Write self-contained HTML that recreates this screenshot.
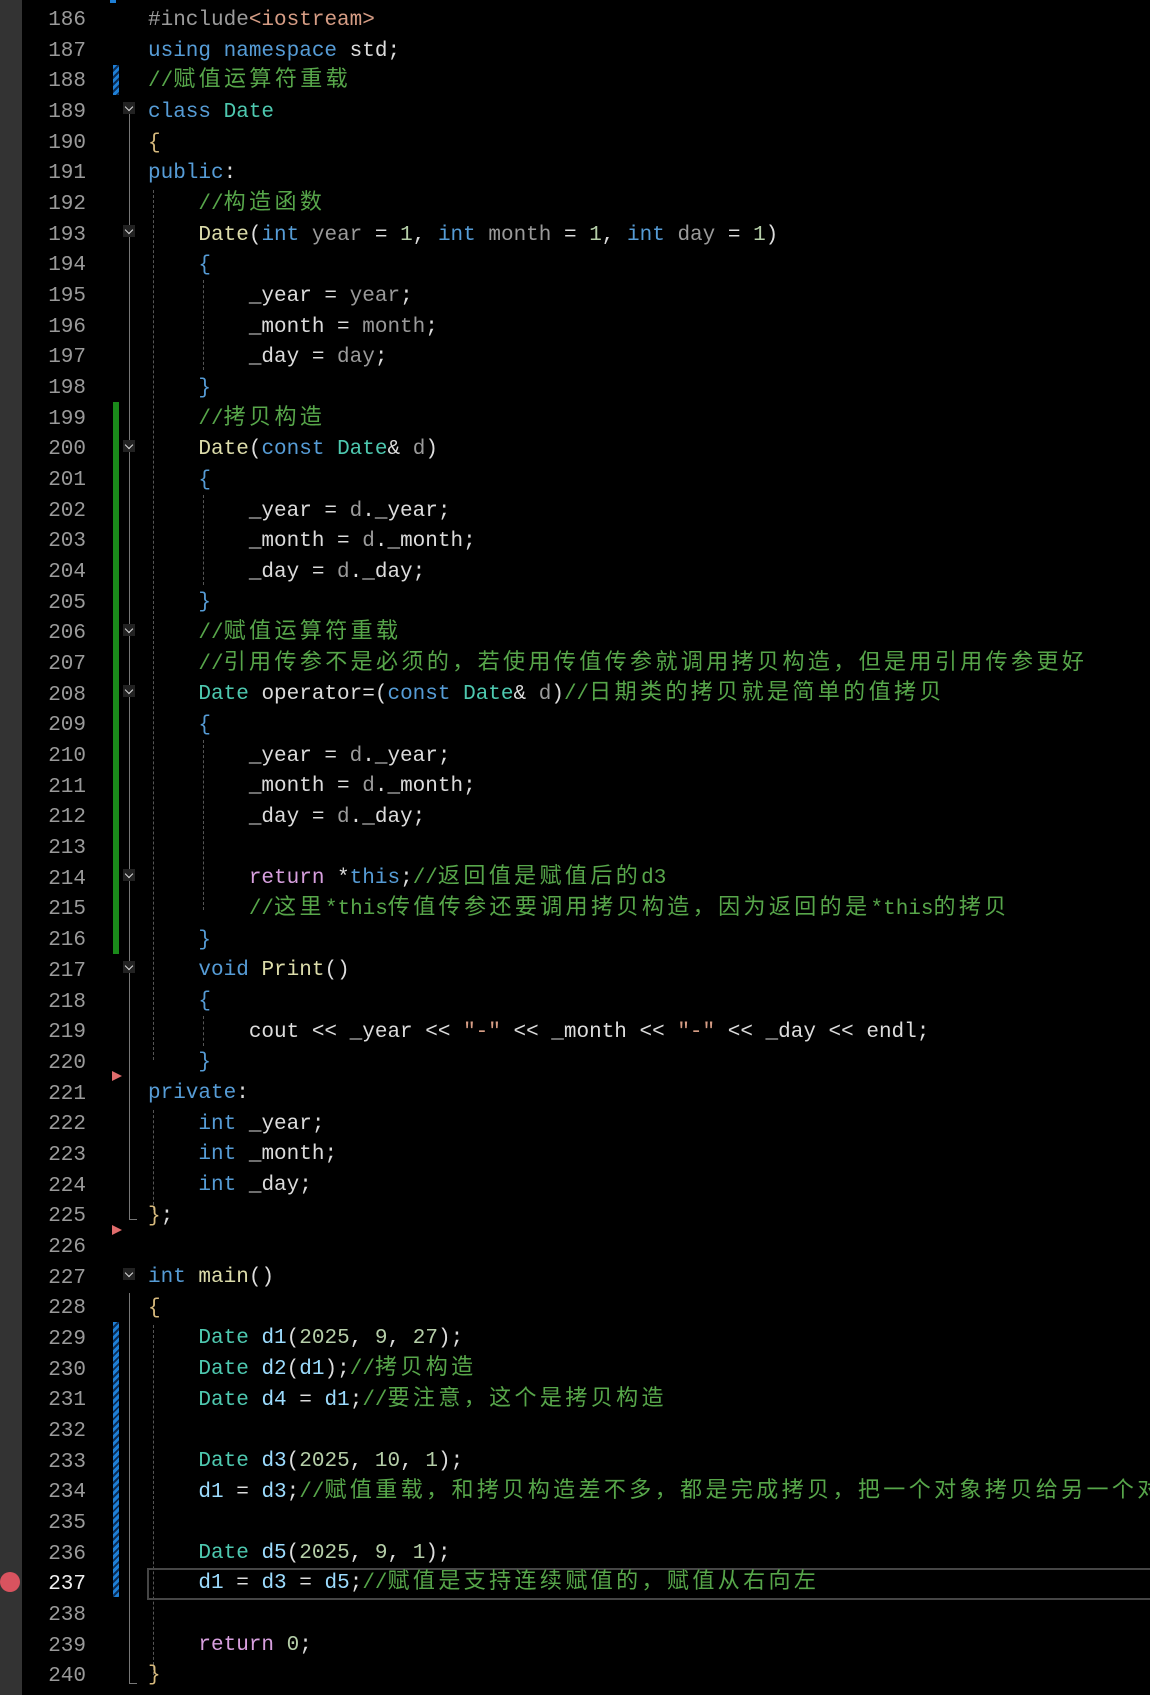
<!DOCTYPE html>
<html><head><meta charset="utf-8"><style>
html,body{margin:0;padding:0;background:#000;width:1150px;height:1695px;overflow:hidden;position:relative}
.g{position:absolute;left:0;top:0;width:22px;height:1695px;background:#333}
.ln{position:absolute;left:30px;width:56px;text-align:right;font:21px/30.67px "Liberation Mono",monospace;color:#9a9a9a}
.cd{position:absolute;left:148px;font:21px "Liberation Mono",monospace;color:#dcdcdc}
.cd div{height:30.67px;line-height:30.67px;white-space:pre;overflow:visible}
i{font-style:normal;font-family:"Noto Sans CJK SC",sans-serif;font-size:22px;letter-spacing:3.4px;line-height:1px}
.k{color:#569cd6}.t{color:#4ec9b0}.c{color:#57a64a}.f{color:#dcdcaa}.p{color:#9a9a9a}.s{color:#d69d85}.n{color:#b5cea8}.r{color:#d8a0df}.v{color:#9cdcfe}.b1{color:#d7ba7d}.b2{color:#569cd6}.pp{color:#9b9b9b}
.fold{position:absolute;left:123px;width:12px;height:12px;background:#222}
.fold:after{content:"";position:absolute;left:3px;top:2px;width:5px;height:5px;border-right:1.5px solid #ddd;border-bottom:1.5px solid #ddd;transform:rotate(45deg)}
.vl{position:absolute;width:1px;background:#777}
.dash{position:absolute;width:0;border-left:1px dashed #555}
.tri{position:absolute;left:112px;width:0;height:0;border-top:5px solid transparent;border-bottom:5px solid transparent;border-left:10px solid #e06c6c}
.hatch{position:absolute;left:113px;width:6px;background:repeating-linear-gradient(135deg,#1e7fd6 0 3px,#0a2c55 3px 5px)}
</style></head><body>
<div class="g"></div>
<div style="position:absolute;left:110px;top:0;width:6px;height:3px;background:#1e7fd6"></div>
<div class="hatch" style="top:65px;height:30px"></div>
<div style="position:absolute;left:113px;top:402px;width:6px;height:552px;background:#1a8a1a"></div>
<div class="hatch" style="top:1322px;height:275px"></div>
<div class="vl" style="left:129px;top:110px;height:1109px"></div>
<div class="vl" style="left:129px;top:1219px;width:8px;height:1px"></div>
<div class="vl" style="left:129px;top:1293px;height:390px"></div>
<div class="vl" style="left:129px;top:1683px;width:8px;height:1px"></div>
<div class="dash" style="left:153px;top:190px;height:870px"></div>
<div class="dash" style="left:153px;top:1110px;height:100px"></div>
<div class="dash" style="left:153px;top:1325px;height:350px"></div>
<div class="dash" style="left:203px;top:280px;height:90px"></div>
<div class="dash" style="left:203px;top:495px;height:90px"></div>
<div class="dash" style="left:203px;top:740px;height:170px"></div>
<div class="dash" style="left:203px;top:1016px;height:30px"></div>
<div class="fold" style="top:102px"></div>
<div class="fold" style="top:225px"></div>
<div class="fold" style="top:440px"></div>
<div class="fold" style="top:624px"></div>
<div class="fold" style="top:685px"></div>
<div class="fold" style="top:869px"></div>
<div class="fold" style="top:961px"></div>
<div class="fold" style="top:1268px"></div>
<div class="tri" style="top:1071px"></div>
<div class="tri" style="top:1225px"></div>
<div style="position:absolute;left:0;top:1572px;width:20px;height:20px;border-radius:50%;background:#d9535f"></div>
<div style="position:absolute;left:147px;top:1568px;width:1010px;height:28px;border:2px solid #464646"></div>

<div class="ln" style="top:6px">186<br>187<br>188<br>189<br>190<br>191<br>192<br>193<br>194<br>195<br>196<br>197<br>198<br>199<br>200<br>201<br>202<br>203<br>204<br>205<br>206<br>207<br>208<br>209<br>210<br>211<br>212<br>213<br>214<br>215<br>216<br>217<br>218<br>219<br>220<br>221<br>222<br>223<br>224<br>225<br>226<br>227<br>228<br>229<br>230<br>231<br>232<br>233<br>234<br>235<br>236<br><span style="color:#eee">237</span><br>238<br>239<br>240</div>

<div class="cd" style="top:6px">
<div><span class="pp">#include</span><span class="s">&lt;iostream&gt;</span></div>
<div><span class="k">using namespace</span> std;</div>
<div><span class="c">//<i>赋值运算符重载</i></span></div>
<div><span class="k">class</span> <span class="t">Date</span></div>
<div><span class="b1">{</span></div>
<div><span class="k">public</span>:</div>
<div>    <span class="c">//<i>构造函数</i></span></div>
<div>    <span class="f">Date</span>(<span class="k">int</span> <span class="p">year</span> = <span class="n">1</span>, <span class="k">int</span> <span class="p">month</span> = <span class="n">1</span>, <span class="k">int</span> <span class="p">day</span> = <span class="n">1</span>)</div>
<div>    <span class="b2">{</span></div>
<div>        _year = <span class="p">year</span>;</div>
<div>        _month = <span class="p">month</span>;</div>
<div>        _day = <span class="p">day</span>;</div>
<div>    <span class="b2">}</span></div>
<div>    <span class="c">//<i>拷贝构造</i></span></div>
<div>    <span class="f">Date</span>(<span class="k">const</span> <span class="t">Date</span>&amp; <span class="p">d</span>)</div>
<div>    <span class="b2">{</span></div>
<div>        _year = <span class="p">d</span>._year;</div>
<div>        _month = <span class="p">d</span>._month;</div>
<div>        _day = <span class="p">d</span>._day;</div>
<div>    <span class="b2">}</span></div>
<div>    <span class="c">//<i>赋值运算符重载</i></span></div>
<div>    <span class="c">//<i>引用传参不是必须的，若使用传值传参就调用拷贝构造，但是用引用传参更好</i></span></div>
<div>    <span class="t">Date</span> operator=(<span class="k">const</span> <span class="t">Date</span>&amp; <span class="p">d</span>)<span class="c">//<i>日期类的拷贝就是简单的值拷贝</i></span></div>
<div>    <span class="b2">{</span></div>
<div>        _year = <span class="p">d</span>._year;</div>
<div>        _month = <span class="p">d</span>._month;</div>
<div>        _day = <span class="p">d</span>._day;</div>
<div></div>
<div>        <span class="r">return</span> *<span class="k">this</span>;<span class="c">//<i>返回值是赋值后的</i>d3</span></div>
<div>        <span class="c">//<i>这里</i>*this<i>传值传参还要调用拷贝构造，因为返回的是</i>*this<i>的拷贝</i></span></div>
<div>    <span class="b2">}</span></div>
<div>    <span class="k">void</span> <span class="f">Print</span>()</div>
<div>    <span class="b2">{</span></div>
<div>        cout &lt;&lt; _year &lt;&lt; <span class="s">"-"</span> &lt;&lt; _month &lt;&lt; <span class="s">"-"</span> &lt;&lt; _day &lt;&lt; endl;</div>
<div>    <span class="b2">}</span></div>
<div><span class="k">private</span>:</div>
<div>    <span class="k">int</span> _year;</div>
<div>    <span class="k">int</span> _month;</div>
<div>    <span class="k">int</span> _day;</div>
<div><span class="b1">}</span>;</div>
<div></div>
<div><span class="k">int</span> <span class="f">main</span>()</div>
<div><span class="b1">{</span></div>
<div>    <span class="t">Date</span> <span class="v">d1</span>(<span class="n">2025</span>, <span class="n">9</span>, <span class="n">27</span>);</div>
<div>    <span class="t">Date</span> <span class="v">d2</span>(<span class="v">d1</span>);<span class="c">//<i>拷贝构造</i></span></div>
<div>    <span class="t">Date</span> <span class="v">d4</span> = <span class="v">d1</span>;<span class="c">//<i>要注意，这个是拷贝构造</i></span></div>
<div></div>
<div>    <span class="t">Date</span> <span class="v">d3</span>(<span class="n">2025</span>, <span class="n">10</span>, <span class="n">1</span>);</div>
<div>    <span class="v">d1</span> = <span class="v">d3</span>;<span class="c">//<i>赋值重载，和拷贝构造差不多，都是完成拷贝，把一个对象拷贝给另一个对象</i></span></div>
<div></div>
<div>    <span class="t">Date</span> <span class="v">d5</span>(<span class="n">2025</span>, <span class="n">9</span>, <span class="n">1</span>);</div>
<div>    <span class="v">d1</span> = <span class="v">d3</span> = <span class="v">d5</span>;<span class="c">//<i>赋值是支持连续赋值的，赋值从右向左</i></span></div>
<div></div>
<div>    <span class="r">return</span> <span class="n">0</span>;</div>
<div><span class="b1">}</span></div>
</div>
</body></html>
